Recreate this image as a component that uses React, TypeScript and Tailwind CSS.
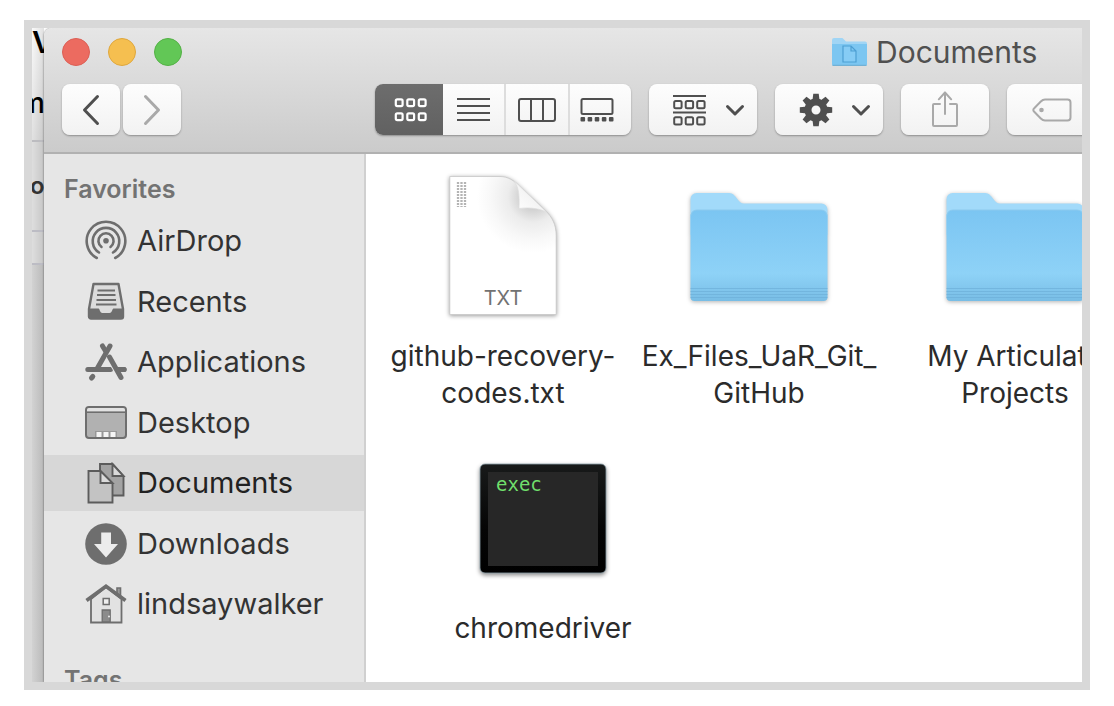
import React from "react";

const gray = "#6e6e6e";
const ink = "#4f4f4f";
const faint = "#a9a9a9";

const buttonBox =
  "flex h-[51px] shrink-0 items-center justify-center rounded-lg bg-gradient-to-b from-[#fdfdfd] to-[#f2f2f2] shadow-[0_1px_2px_rgba(0,0,0,0.32)]";

function Chevron({ dir, color }: { dir: "left" | "right" | "down"; color: string }) {
  const points = {
    left: "22.500,6.500 9.500,20 22.500,33.500",
    right: "9.500,6.500 22.500,20 9.500,33.500",
    down: "8.500,16.500 16,24 23.500,16.500",
  };
  return (
    <svg width="32" height="40" viewBox="0 0 32 40" fill="none" stroke={color} strokeWidth="3" strokeLinecap="round" strokeLinejoin="round" aria-hidden="true">
      <polyline points={points[dir]} />
    </svg>
  );
}

function IconsView() {
  return (
    <svg width="34" height="26" viewBox="0 0 34 26" fill="none" stroke="#fff" strokeWidth="2.2" aria-hidden="true">
      {[2.3, 16.3].map((y) => [1.8, 13.3, 24.8].map((x) => <rect key={`${x}-${y}`} x={x} y={y} width="6.8" height="6.8" rx="1.5" />))}
    </svg>
  );
}

function ListView() {
  return (
    <svg width="34" height="26" viewBox="0 0 34 26" stroke={ink} strokeWidth="2" aria-hidden="true">
      <path d="M0 2h33M0 9h33M0 16h33M0 23h33" />
    </svg>
  );
}

function ColumnsView() {
  return (
    <svg width="38" height="26" viewBox="0 0 38 26" fill="none" stroke={ink} strokeWidth="2" aria-hidden="true">
      <rect x="1" y="2" width="36" height="22" rx="2" />
      <path d="M13 2v22M25 2v22" />
    </svg>
  );
}

function GalleryView() {
  return (
    <svg className="mr-1.5" width="34" height="26" viewBox="0 0 34 26" fill="none" stroke={ink} strokeWidth="2" aria-hidden="true">
      <rect x="1.5" y="2" width="31" height="15" rx="1.5" />
      {[0.5, 7.6, 14.7, 21.8, 28.9].map((x) => <rect key={x} x={x} y="20" width="4.6" height="4.4" rx="1" fill={ink} stroke="none" />)}
    </svg>
  );
}

function GroupIcon() {
  return (
    <svg width="34" height="32" viewBox="0 0 34 32" fill="none" stroke={ink} strokeWidth="2" aria-hidden="true">
      <path d="M0 2h33M0 18.5h33" />
      {[7, 23.3].map((y) => [1.2, 12.7, 24.2].map((x) => <rect key={`${x}-${y}`} x={x} y={y} width="7.4" height="7.2" rx="1.5" />))}
    </svg>
  );
}

function GearIcon() {
  return (
    <svg width="34" height="34" viewBox="-17 -17 34 34" aria-hidden="true">
      {[0, 45, 90, 135, 180, 225, 270, 315].map((a) => (
        <path key={a} d="M-3.6-9L-2.7-16.2h5.4L3.6-9z" fill={ink} transform={`rotate(${a})`} />
      ))}
      <circle r="8" fill="none" stroke={ink} strokeWidth="7" />
    </svg>
  );
}

function ShareIcon() {
  return (
    <svg width="28" height="38" viewBox="0 0 28 38" fill="none" stroke={faint} strokeWidth="2" strokeLinecap="round" strokeLinejoin="round" aria-hidden="true">
      <path d="M9 13H3a1 1 0 0 0-1 1v20a1 1 0 0 0 1 1h22a1 1 0 0 0 1-1V14a1 1 0 0 0-1-1h-6M14 23V1.500M7.800 8.300L14 1.500l6.200 6.800" />
    </svg>
  );
}

function TagIcon() {
  return (
    <svg width="40" height="26" viewBox="0 0 40 26" fill="none" stroke={faint} strokeWidth="2" strokeLinejoin="round" aria-hidden="true">
      <path d="M13 2.500h22.500a3 3 0 0 1 3 3v15a3 3 0 0 1-3 3H13c-2 0-3-.8-4.200-2L2 14.500a2 2 0 0 1 0-3L8.800 4.500c1.200-1.200 2.200-2 4.200-2z" />
      <circle cx="9.500" cy="13" r="2.300" fill={faint} stroke="none" />
    </svg>
  );
}

function TitleFolder() {
  return (
    <svg width="37" height="30" viewBox="0 0 37 30" aria-hidden="true">
      <path d="M1 3a2 2 0 0 1 2-2h8.500l3.500 3.500h19a2 2 0 0 1 2 2V27a1.500 1.500 0 0 1-1.500 1.500h-32A1.500 1.500 0 0 1 1 27z" fill="#a0d5f5" />
      <path d="M1 7h35v20a1.500 1.500 0 0 1-1.500 1.500h-32A1.500 1.500 0 0 1 1 27z" fill="#7cc6f1" />
      <path d="M1.500 28.300h34" stroke="#68a9cf" />
      <path d="M12 9h8l5 5v11H12zM20 9v5h5" fill="#86ccf5" stroke="#4d9fd3" strokeWidth="1.200" />
    </svg>
  );
}

function AirDropIcon() {
  return (
    <svg width="42" height="42" viewBox="0 0 42 42" fill="none" stroke={gray} strokeWidth="2.600" strokeLinecap="round" aria-hidden="true">
      <path d="M11.800 38a19.300 19.300 0 1 1 18.400 0" />
      <path d="M14 32.500a13.300 13.300 0 1 1 14 0" />
      <path d="M16.500 27a7.600 7.600 0 1 1 9 0" />
      <circle cx="21" cy="20.800" r="2.800" fill={gray} stroke="none" />
    </svg>
  );
}

function RecentsIcon() {
  return (
    <svg width="42" height="42" viewBox="0 0 42 42" fill="none" aria-hidden="true">
      <path d="M8.500 3h25L38 28v7.500a2 2 0 0 1-2 2H6a2 2 0 0 1-2-2V28z" fill="#dcdcdc" stroke={gray} strokeWidth="2.400" strokeLinejoin="round" />
      <path d="M12.500 9.500h17.500M12 14h18.500M11.500 19h19.500M11 23.500h20.500" stroke={gray} strokeWidth="2.200" />
      <path d="M4 27.500h9.500c1.500 0 1 4.500 4 4.500h7c3 0 2.500-4.500 4-4.500H38v8a2 2 0 0 1-2 2H6a2 2 0 0 1-2-2z" fill={gray} />
    </svg>
  );
}

function ApplicationsIcon() {
  return (
    <svg width="42" height="42" viewBox="0 0 42 42" fill="none" stroke={gray} strokeWidth="5" strokeLinecap="round" aria-hidden="true">
      <path d="M2.800 28.500h22.700M34 28.500h5.200" />
      <path d="M25 5L12.500 27M7.800 35.500l-1.300 1.500" />
      <path d="M17.500 5l3 5" />
      <path d="M24 15.500L36.200 36.500" stroke="#e6e6e6" strokeWidth="7" strokeLinecap="butt" />
      <path d="M24.500 16L36 36.500" />
      <path d="M33 28.500h6" />
    </svg>
  );
}

function DesktopIcon() {
  return (
    <svg width="42" height="42" viewBox="0 0 42 42" aria-hidden="true">
      <rect x="1" y="5" width="40" height="31" rx="3" fill="#b1b1b1" stroke={gray} strokeWidth="2" />
      <path d="M2 9.500V8a2 2 0 0 1 2-2h34a2 2 0 0 1 2 2v1.500z" fill="#e2e2e2" />
      <path d="M1 10.200h40" stroke={gray} strokeWidth="1.600" />
      <path d="M10 35v-6h22v6z" fill="#989898" />
      <path d="M11.500 30h5v5h-5zM18.500 30h5v5h-5zM25.500 30h5v5h-5z" fill="#f5f5f5" />
    </svg>
  );
}

function DocumentsIcon() {
  return (
    <svg width="42" height="42" viewBox="0 0 42 42" stroke="#5c5c5c" strokeWidth="1.900" aria-hidden="true">
      <path d="M15 2h12.500L38.500 14v19.500H15z" fill="#a3a3a3" />
      <path d="M27.500 2v12h11z" fill="#dadada" />
      <path d="M3.500 9h12L27.500 21.500v19h-24z" fill="#c3c3c3" />
      <path d="M15.500 9v12h12z" fill="#dadada" />
    </svg>
  );
}

function DownloadsIcon() {
  return (
    <svg width="42" height="42" viewBox="0 0 42 42" aria-hidden="true">
      <circle cx="21" cy="21" r="20.800" fill={gray} />
      <path d="M16.200 9.500h9.800v11.500h7L21 34.500 9 21h7.200z" fill="#ececec" />
    </svg>
  );
}

function HomeIcon() {
  return (
    <svg width="42" height="42" viewBox="0 0 42 42" fill="none" stroke={gray} aria-hidden="true">
      <path d="M32 13V5h3.500v11" fill="#999" strokeWidth="1.600" />
      <path d="M6 16L21 4l15.500 12v23.500H6z" fill="#e2e2e2" strokeWidth="1.800" />
      <path d="M1.500 17.500L21 3.200l19.500 14.300" strokeWidth="3.600" />
      <path d="M18.200 15.500h6v6h-6z" strokeWidth="1.500" fill="#efefef" />
      <path d="M17.200 39v-12h8v12z" fill="#8c8c8c" strokeWidth="1.300" />
      <circle cx="24" cy="33.500" r="1" fill="#eee" stroke="none" />
    </svg>
  );
}

function TextFileIcon() {
  return (
    <svg className="overflow-visible" width="108" height="142" viewBox="0 0 108 142" aria-hidden="true">
      <defs>
        <radialGradient id="page" gradientUnits="userSpaceOnUse" cx="84" cy="22" r="56">
          <stop offset="0.200" stopColor="#cfcfcf" />
          <stop offset="0.450" stopColor="#ececec" />
          <stop offset="0.750" stopColor="#f8f8f8" />
          <stop offset="1" stopColor="#fff" />
        </radialGradient>
        <linearGradient id="curl" x1="0" y1="1" x2="0.500" y2="0.500">
          <stop offset="0" stopColor="#fff" />
          <stop offset="1" stopColor="#f4f4f4" />
        </linearGradient>
      </defs>
      <g className="drop-shadow-[0_1px_2px_rgba(0,0,0,0.4)]">
        <path d="M.8 1.500H51c8 0 14 4 20 10L96 35c7 7 11.200 14 11.200 26v78.500H.8z" fill="url(#page)" stroke="#c8c8c8" strokeWidth=".8" />
      </g>
      <path d="M65 6.500c5 5 5.500 15 5 27 11-1.500 20 0 27.500 3.500L71 11.500C69 9.500 67 7.500 65 6.500z" fill="url(#curl)" stroke="#dcdcdc" strokeWidth=".7" />
      <path d="M9 7v25M12.500 7v25M16 7v25" stroke="#b4b4b4" strokeWidth="2.300" strokeDasharray="2 1" />
      <text x="54" y="130" textAnchor="middle" fontFamily="Inter, sans-serif" fontSize="20" fill="#727272">TXT</text>
    </svg>
  );
}

function FolderIcon() {
  return (
    <svg className="overflow-visible" width="140" height="142" viewBox="0 0 140 142" aria-hidden="true">
      <defs>
        <linearGradient id="folder" x1="0" y1="0" x2="0" y2="1">
          <stop offset="0" stopColor="#7bc5f2" />
          <stop offset="0.700" stopColor="#8ed2f7" />
          <stop offset="1" stopColor="#78bde5" />
        </linearGradient>
      </defs>
      <g className="drop-shadow-[0_1px_2px_rgba(0,0,0,0.3)]">
        <path d="M1.500 24a6 6 0 0 1 6-6H40c4 0 6 3 8 5.500 2.500 3.500 4 5 7 5h77.500a6 6 0 0 1 6 6V60H1.500z" fill="#a2dafa" />
        <path d="M1.500 41a6 6 0 0 1 6-6h125a6 6 0 0 1 6 6v81a4 4 0 0 1-4 4h-129a4 4 0 0 1-4-4z" fill="url(#folder)" />
      </g>
      <path d="M2 40.500c.5-3.500 2.500-5.500 6-5.500h124c3.500 0 5.500 2 6 5.500" fill="none" stroke="#8ccaee" />
      <path d="M1.500 113.500h137M1.500 116.500h137M1.500 119.500h137M1.500 122.500h137" stroke="#6dafd8" strokeWidth=".7" />
    </svg>
  );
}

function ExecIcon() {
  return (
    <svg className="overflow-visible" width="128" height="142" viewBox="0 0 128 142" aria-hidden="true">
      <defs>
        <linearGradient id="bezel" x1="0" y1="0" x2="0" y2="1">
          <stop offset="0" stopColor="#181a1a" />
          <stop offset="0.600" stopColor="#050505" />
          <stop offset="1" stopColor="#000" />
        </linearGradient>
      </defs>
      <g className="drop-shadow-[0_2px_2px_rgba(0,0,0,0.45)]">
        <rect x="1" y="17" width="126" height="109" rx="5" fill="url(#bezel)" stroke="#8fa3ad" strokeWidth=".8" />
      </g>
      <rect x="9" y="25" width="110" height="94" fill="#272727" />
      <text x="17" y="44" fontFamily="DejaVu Sans Mono, monospace" fontSize="19" fill="#70df6c">exec</text>
    </svg>
  );
}

const places = [
  { label: "AirDrop", Icon: AirDropIcon },
  { label: "Recents", Icon: RecentsIcon },
  { label: "Applications", Icon: ApplicationsIcon },
  { label: "Desktop", Icon: DesktopIcon },
  { label: "Documents", Icon: DocumentsIcon, current: true },
  { label: "Downloads", Icon: DownloadsIcon },
  { label: "lindsaywalker", Icon: HomeIcon },
];

const fileRows = [
  {
    className: "flex h-[272px]",
    files: [
      { Icon: TextFileIcon, label: <>github-recovery-<wbr />codes.txt</> },
      { Icon: FolderIcon, label: <>Ex_Files_UaR_Git_<wbr />GitHub</> },
      { Icon: FolderIcon, label: <>My Articulate Projects</> },
    ],
  },
  {
    className: "flex h-[272px] pl-10",
    files: [{ Icon: ExecIcon, label: <>chromedriver</> }],
  },
];

function WindowBehind() {
  return (
    <div className="flex w-3 shrink-0 flex-col overflow-hidden bg-gradient-to-r from-[#d2d2d2] to-[#b9b9b9] text-black" aria-hidden="true">
      <div className="flex h-[114px] flex-col gap-5 border-b-2 border-[#bcbcc0] bg-gradient-to-br from-[#fafafa] to-[#c9c9c9]">
        <span className="text-3xl leading-7 font-semibold">V</span>
        <span className="-ml-3 text-[28px] leading-[54px] font-medium">m</span>
      </div>
      <div className="flex h-[90px] items-center border-b-2 border-[#bcbcc4] bg-gradient-to-r from-[#dedede] to-[#c6c6c6]">
        <span className="-ml-0.5 text-2xl leading-9 font-semibold text-[#333]">o</span>
      </div>
      <div className="h-[33px] border-b-2 border-[#bcbcc4] bg-gradient-to-r from-[#dedede] to-[#c6c6c6]" />
    </div>
  );
}

function Toolbar() {
  return (
    <header className="flex h-[126px] shrink-0 flex-col gap-[9px] overflow-hidden border-b-2 border-[#b1b1b1] bg-gradient-to-b from-[#e6e6e6] to-[#cbcbcb] pl-[18px]">
      <div className="flex h-[47px] shrink-0 items-center">
        <div className="flex gap-[18px]">
          <button aria-label="Close" className="size-7 rounded-full border border-[#dc5f55] bg-[#ec6b60]" />
          <button aria-label="Minimize" className="size-7 rounded-full border border-[#dfa73d] bg-[#f5bf50]" />
          <button aria-label="Zoom" className="size-7 rounded-full border border-[#54b146] bg-[#62c756]" />
        </div>
        <h1 className="ml-[649px] flex shrink-0 items-center gap-2 text-[30px] leading-9 text-[#505050]">
          <TitleFolder />
          Documents
        </h1>
      </div>
      <div className="flex shrink-0 items-center">
        <nav className="flex shrink-0 gap-[3px]" aria-label="History">
          <button aria-label="Back" className={`${buttonBox} w-[58px]`}><Chevron dir="left" color={ink} /></button>
          <button aria-label="Forward" className={`${buttonBox} w-[58px]`}><Chevron dir="right" color={faint} /></button>
        </nav>
        <div className="ml-[194px] flex h-[51px] w-64 shrink-0 overflow-hidden rounded-lg bg-gradient-to-b from-[#fdfdfd] to-[#f2f2f2] shadow-[0_1px_2px_rgba(0,0,0,0.32)]">
          <button aria-label="Icon view" aria-pressed="true" className="flex w-[68px] items-center justify-center bg-gradient-to-b from-[#6d6d6d] to-[#616161] pl-1"><IconsView /></button>
          <button aria-label="List view" className="flex flex-1 items-center justify-center"><ListView /></button>
          <button aria-label="Column view" className="flex flex-1 items-center justify-center border-l-2 border-[#dddddd]"><ColumnsView /></button>
          <button aria-label="Gallery view" className="flex flex-1 items-center justify-center border-l-2 border-[#dddddd]"><GalleryView /></button>
        </div>
        <div className="ml-[18px] flex shrink-0 gap-[18px]">
          <button aria-label="Group by" className={`${buttonBox} w-[108px] gap-3 pl-[18px]`}><GroupIcon /><Chevron dir="down" color={ink} /></button>
          <button aria-label="Actions" className={`${buttonBox} w-[108px] gap-3 pl-[18px]`}><GearIcon /><Chevron dir="down" color={ink} /></button>
          <button aria-label="Share" className={`${buttonBox} w-[88px]`}><ShareIcon /></button>
          <button aria-label="Edit tags" className={`${buttonBox} w-[88px] pl-0.5`}><TagIcon /></button>
        </div>
      </div>
    </header>
  );
}

function Sidebar() {
  return (
    <aside className="w-[322px] shrink-0 overflow-hidden border-r-2 border-[#d0d0d0] bg-[#e6e6e6]">
      <h2 className="mt-[19px] mb-2 pl-5 text-[25px] leading-8 font-semibold text-[#737373]">Favorites</h2>
      <ul className="flex h-[419px] flex-col justify-between">
        {places.map(({ label, Icon, current }) => (
          <li key={label}>
            <a href="#" aria-current={current ? "page" : undefined} className={`flex h-14 items-center gap-2.5 pl-[41px] text-[29px] ${current ? "bg-[#d7d7d7] text-[#222]" : "text-[#333]"}`}>
              <Icon />
              {label}
            </a>
          </li>
        ))}
      </ul>
      <h2 className="mt-8 pl-5 text-[25px] leading-8 font-semibold text-[#737373]">Tags</h2>
    </aside>
  );
}

export default function App() {
  return (
    <div className="h-screen bg-white px-6 pt-5 pb-4 font-['Inter',sans-serif]">
      <div className="flex h-full overflow-hidden border-8 border-[#d8d8d8]">
        <WindowBehind />
        <section className="flex min-w-0 flex-1 flex-col overflow-hidden rounded-tl-lg shadow-[0_0_2px_rgba(0,0,0,0.6)]">
          <Toolbar />
          <div className="flex min-h-0 flex-1">
            <Sidebar />
            <main className="min-w-0 flex-1 overflow-hidden bg-white pt-[21px] pl-[9px]">
              {fileRows.map((row, r) => (
                <ul key={r} className={row.className}>
                  {row.files.map(({ Icon, label }, i) => (
                    <li key={i} className="flex w-64 shrink-0 flex-col items-center gap-[21px]">
                      <Icon />
                      <span className="w-60 text-center text-[28px] leading-[37px] text-[#2b2b2b]">{label}</span>
                    </li>
                  ))}
                </ul>
              ))}
            </main>
          </div>
        </section>
      </div>
    </div>
  );
}
